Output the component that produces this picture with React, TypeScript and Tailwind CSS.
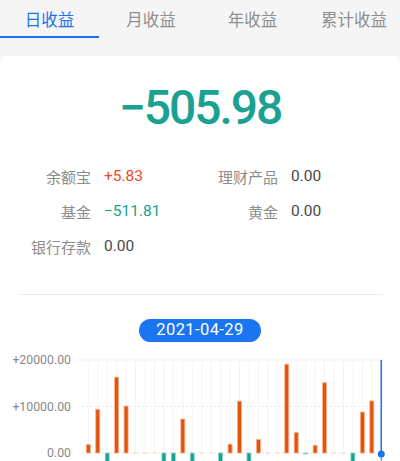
const tabs = ["日收益", "月收益", "年收益", "累计收益"];

type Item = { label: string; value: string; tone?: "up" | "down" };

const rows: Item[][] = [
  [
    { label: "余额宝", value: "+5.83", tone: "up" },
    { label: "理财产品", value: "0.00" },
  ],
  [
    { label: "基金", value: "−511.81", tone: "down" },
    { label: "黄金", value: "0.00" },
  ],
  [{ label: "银行存款", value: "0.00" }],
];

// daily values for the bar chart, last one is the selected day
const bars = [
  1800, 9400, -4000, 16300, 10100, 0, 0, 0, -4000, -4000, 7300, -4000, 0, 0,
  -4000, 1900, 11150, -4000, 2900, 0, 0, 19100, 4400, -150, 1650, 15100, 0, 0,
  -4000, 8800, 11200, 0,
];

const num = { fontFamily: "Roboto, 'Liberation Sans', sans-serif" };

function Chart() {
  const zero = 111;
  const top = 18;
  const scale = (zero - top) / 20000;
  const xAt = (i: number) => 88.3 + i * 9.45;
  const last = bars.length - 1;

  return (
    <svg width="400" height="130" viewBox="0 0 400 130" className="block">
      {bars.map((_, i) => (
        <line key={"v" + i} x1={xAt(i)} x2={xAt(i)} y1={top} y2={zero} stroke="#f4f4f4" strokeWidth="1" />
      ))}
      {[top, 64.5, zero].map((y) => (
        <line key={y} x1="82" x2="387" y1={y} y2={y} stroke="#e8e8e8" strokeWidth="1" strokeDasharray="2 2" />
      ))}
      {[
        ["+20000.00", top],
        ["+10000.00", 64.5],
        ["0.00", zero],
      ].map(([t, y]) => (
        <text key={t as string} x="71" y={(y as number) + 4.3} textAnchor="end" fontSize="12.3" fill="#8a8a8a" style={num}>
          {t}
        </text>
      ))}
      {bars.map((v, i) => {
        if (i === last) return null;
        const x = xAt(i) - 2;
        if (v === 0) {
          return <rect key={i} x={x} y={zero - 0.5} width="4" height="1" fill="#f8d3c0" />;
        }
        const h = Math.max(Math.abs(v) * scale, 1);
        const up = v > 0;
        return (
          <rect
            key={i}
            x={x}
            y={up ? zero - h : zero}
            width="4"
            height={h}
            fill={up ? "#e5520b" : "#17a290"}
            stroke={up ? "#f6b08c" : "#93d6cc"}
            strokeWidth="0.8"
          />
        );
      })}
      <line x1={xAt(last)} x2={xAt(last)} y1={top} y2={zero - 2} stroke="#1a73f0" strokeWidth="1.5" />
      <line x1={xAt(last)} x2={xAt(last)} y1={zero + 3} y2={zero + 8} stroke="#1a73f0" strokeWidth="1" />
      <circle cx={xAt(last)} cy={zero + 1} r="3.5" fill="#1a73f0" />
    </svg>
  );
}

export default function App() {
  return (
    <div className="w-[400px] h-[461px] overflow-hidden bg-[#f5f5f5]" style={{ fontFamily: "'Noto Sans CJK SC', Roboto, sans-serif" }}>
      {/* tab bar */}
      <div className="flex gap-[2.5px] h-[38px] whitespace-nowrap">
        {tabs.map((t, i) => (
          <div
            key={t}
            className={`w-[99px] shrink-0 flex items-center justify-center text-[16.5px] relative ${
              i === 0 ? "text-[#1b74ee]" : "text-[#8f8f8f]"
            }`}
          >
            {t}
            {i === 0 && <div className="absolute left-0 right-0 bottom-0 h-[2.5px] bg-[#1b74ee]" />}
          </div>
        ))}
      </div>

      <div className="mt-[18px] bg-white rounded-t-lg pt-[28px]">
        <div className="flex justify-center">
          <div className="text-[48px] leading-[48px] font-medium text-[#1aa191] tracking-[-2px]" style={num}>
            −505.98
          </div>
        </div>

        <div className="mt-[27.5px]">
          {rows.map((row, r) => (
            <div key={r} className="flex h-[35px] items-center">
              {row.map((it) => (
                <div key={it.label} className="w-[187px] flex items-center">
                  <div className="w-[91px] text-right text-[15px] text-[#8c8c8c]">{it.label}</div>
                  <div
                    className={`ml-[13px] text-[15.5px] ${
                      it.tone === "up" ? "text-[#f1462a]" : it.tone === "down" ? "text-[#17a191]" : "text-[#474747]"
                    }`}
                    style={num}
                  >
                    {it.value}
                  </div>
                </div>
              ))}
            </div>
          ))}
        </div>

        <div className="mt-[29px] ml-[20px] mr-[17px] h-px bg-[#ececec]" />

        <div className="mt-[24px] flex justify-center">
          <div
            className="w-[122px] h-[23px] rounded-full bg-[#1a75f0] text-white text-[16.5px] flex items-center justify-center tracking-[0.4px]"
            style={num}
          >
            2021-04-29
          </div>
        </div>

        <Chart />
      </div>
    </div>
  );
}
